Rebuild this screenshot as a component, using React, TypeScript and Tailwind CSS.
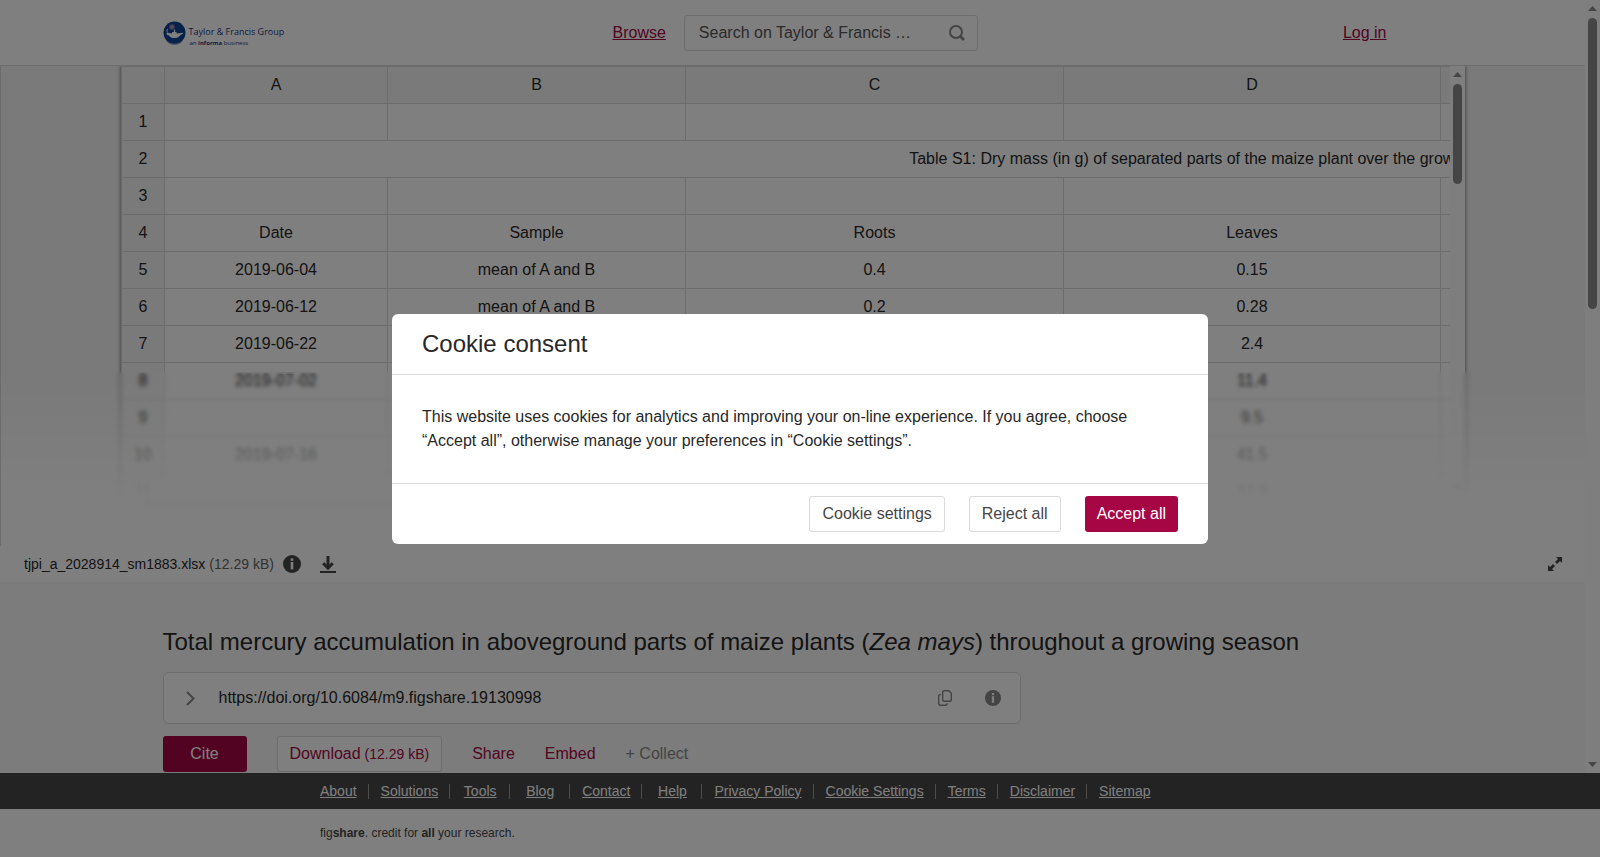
import React, { useState } from 'react';

const ROW_COUNT = 11;
const COLUMNS = ['A', 'B', 'C', 'D', 'E', 'F'];

const CELLS: Record<number, string[]> = {
    4: ['Date', 'Sample', 'Roots', 'Leaves', '', ''],
    5: ['2019-06-04', 'mean of A and B', '0.4', '0.15', '', ''],
    6: ['2019-06-12', 'mean of A and B', '0.2', '0.28', '', ''],
    7: ['2019-06-22', '', '', '2.4', '', ''],
    8: ['2019-07-02', '', '', '11.4', '', ''],
    9: ['', '', '', '9.5', '', ''],
    10: ['2019-07-16', '', '', '41.5', '', ''],
    11: ['', '', '', '37.9', '', ''],
};

const FOOTER_LINKS = [
    'About',
    'Solutions',
    'Tools',
    'Blog',
    'Contact',
    'Help',
    'Privacy Policy',
    'Cookie Settings',
    'Terms',
    'Disclaimer',
    'Sitemap',
];

const InfoIcon: React.FC<{ className?: string }> = ({ className }) => (
    <svg viewBox="0 0 18 18" className={className} aria-hidden="true">
        <circle cx="9" cy="9" r="9" fill="currentColor" />
        <rect x="7.7" y="3.4" width="2.6" height="2.4" fill="#fff" />
        <rect x="7.7" y="7" width="2.6" height="7.4" fill="#fff" />
    </svg>
);

const Logo: React.FC = () => (
    <a href="#" className="flex items-start gap-[3px] pt-[3px] text-[#1f3a85]" aria-label="Taylor & Francis Group">
        <svg viewBox="0 0 23 24" className="w-[23px] h-6" aria-hidden="true">
            <ellipse cx="11.5" cy="13" rx="10.5" ry="10.8" fill="#7d8fb5" />
            <circle cx="11.5" cy="11.5" r="11" fill="#0d4594" />
            <circle cx="9" cy="6" r="3" fill="#5d6aa5" />
            <circle cx="9" cy="6" r="1.8" fill="#b99bb8" />
            <path d="M3.2 12.400l1.600-.6 3.800.6.8-1.400h3.800l.8 1.400 6.200-.6c-.6 1.400-1.600 2-3 2.400-1 1.600-2.800 2.600-4.600 2.800h-2.400c-1.800-.2-3.400-1.200-4.200-2.600-1.200-.2-2.200-.8-2.800-2z" fill="#fff" />
            <path d="M11.5 8.500v2.800" stroke="#fff" strokeWidth="1.2" />
            <path d="M4.600 8c-.8 1.200-.8 2.400 0 3.600" stroke="#fff" strokeWidth=".9" fill="none" />
        </svg>
        <span className="flex flex-col pt-1 font-['Open_Sans',sans-serif]">
            <span className="text-[9px] leading-[14px] whitespace-nowrap">Taylor &amp; Francis Group</span>
            <span className="text-[6px] leading-[8px] whitespace-nowrap pl-px">
                an <b>informa</b> business
            </span>
        </span>
    </a>
);

const Header: React.FC = () => (
    <header className="bg-white border-b border-[#dadada]">
        <div className="w-full max-w-[1260px] mx-auto h-[65px] flex items-center">
            <div className="w-[450px]">
                <Logo />
            </div>
            <a href="#" className="text-[#a60744] underline mr-[18px]">Browse</a>
            <form className="w-[294px] h-9 flex items-center border border-[#dadada] rounded-[3px] pl-3.5 pr-1.5">
                <input
                    type="text"
                    aria-label="Search"
                    placeholder="Search on Taylor & Francis …"
                    className="flex-1 min-w-0 outline-none placeholder:text-[#555] placeholder:opacity-100"
                />
                <button type="submit" aria-label="Search" className="p-1.5 text-[#888]">
                    <svg viewBox="0 0 16 16" className="w-4 h-4" fill="none" stroke="currentColor" aria-hidden="true">
                        <circle cx="7" cy="7" r="6" strokeWidth="2" />
                        <path d="M11.3 11.3 15 15" strokeWidth="2.8" />
                    </svg>
                </button>
            </form>
            <a href="#" className="text-[#a60744] underline ml-auto mr-9">Log in</a>
        </div>
    </header>
);

const Arrow: React.FC<{ down?: boolean }> = ({ down }) => (
    <svg viewBox="0 0 9 5" className="w-[9px] h-[5px]" aria-hidden="true">
        <path d={down ? 'M0 0h9L4.5 5z' : 'M0 5h9L4.5 0z'} fill="#8b8b8b" />
    </svg>
);

const Spreadsheet: React.FC = () => (
    <div className="w-full max-w-[1344px] h-[445px] mx-auto flex flex-col bg-[#fcfcfc] shadow-[0_0_4px_rgba(0,0,0,0.6)]">
        <div className="flex-1 min-h-0 flex">
            <div className="flex-1 min-w-0 overflow-hidden bg-white">
                <table className="table-fixed border-collapse w-[2156px] text-center text-[#282828]">
                    <colgroup>
                        <col className="w-[43px]" />
                        <col className="w-[223px]" />
                        <col className="w-[298px]" />
                        <col className="w-[378px]" />
                        <col className="w-[377px]" />
                        <col />
                        <col />
                    </colgroup>
                    <thead>
                        <tr className="h-[37px] bg-[#f5f5f5]">
                            <th className="border border-[#d8d8d8]" />
                            {COLUMNS.map(col => (
                                <th key={col} className="border border-[#d8d8d8] font-normal">{col}</th>
                            ))}
                        </tr>
                    </thead>
                    <tbody>
                        {Array.from({ length: ROW_COUNT }, (_, i) => i + 1).map(row => (
                            <tr key={row} className="h-[37px]">
                                <th className="border border-[#d8d8d8] bg-[#f5f5f5] font-normal">{row}</th>
                                {row === 2 ? (
                                    <td colSpan={6} className="border border-[#d8d8d8]">
                                        Table S1: Dry mass (in g) of separated parts of the maize plant over the growing season
                                    </td>
                                ) : (
                                    COLUMNS.map((col, i) => (
                                        <td key={col} className="border border-[#d8d8d8]">{CELLS[row]?.[i]}</td>
                                    ))
                                )}
                            </tr>
                        ))}
                    </tbody>
                </table>
            </div>
            <div className="w-[15px] flex flex-col items-center justify-between pt-1.5 pb-1.5">
                <div className="flex flex-col items-center gap-[7px]">
                    <Arrow />
                    <div className="w-[9px] h-[100px] rounded-full bg-[#8b8b8b]" />
                </div>
                <Arrow down />
            </div>
        </div>
        <div className="h-[15px] flex items-center pl-[22px]">
            <div className="w-[810px] h-[9px] rounded-full bg-[#8b8b8b]" />
        </div>
    </div>
);

const Viewer: React.FC = () => (
    <section className="bg-white">
        <div className="relative h-[480px] overflow-hidden bg-[#f4f4f4] border-l border-[#d8d8d8]">
            <Spreadsheet />
            <div className="absolute inset-x-0 bottom-0 h-[174px] backdrop-blur-[2px] bg-linear-to-b from-white/0 via-white/95 via-[71%] to-white" />
        </div>
        <div className="h-9 flex items-center pl-6 pr-[23px] text-sm text-[#282828]">
            <span>tjpi_a_2028914_sm1883.xlsx</span>
            <span className="ml-1 text-[#666]">(12.29 kB)</span>
            <button aria-label="File info" className="ml-[9px] text-[#464646]">
                <InfoIcon className="w-[18px] h-[18px]" />
            </button>
            <a href="#" aria-label="Download file" className="ml-[19px] text-[#464646]">
                <svg viewBox="0 0 16 17" className="w-4 h-[17px]" fill="none" stroke="currentColor" aria-hidden="true">
                    <path d="M8 0v12" strokeWidth="3" />
                    <path d="M3.2 7.300 8 12.100l4.800-4.800" strokeWidth="3" />
                    <path d="M0 16h16" strokeWidth="2" />
                </svg>
            </a>
            <button aria-label="Full screen" className="ml-auto text-[#464646]">
                <svg viewBox="0 0 14 14" className="w-3.5 h-3.5" aria-hidden="true">
                    <path d="M8 0h6v6l-2-2-3 3-2-2 3-3zM6 14H0V8l2 2 3-3 2 2-3 3z" fill="currentColor" />
                    <path d="M6 6l2 2" stroke="#fff" strokeWidth="1.2" />
                </svg>
            </button>
        </div>
    </section>
);

const Article: React.FC = () => (
    <main className="w-full max-w-[1260px] mx-auto pt-[42px]">
        <h1 className="text-2xl leading-9 text-[#282828]">
            Total mercury accumulation in aboveground parts of maize plants (<i>Zea mays</i>) throughout a growing season
        </h1>
        <div className="mt-3 max-w-[858px] h-[52px] flex items-center bg-white border border-[#dadada] rounded-md pl-[22px] pr-[19px]">
            <button aria-label="Show versions" className="text-[#888]">
                <svg viewBox="0 0 9 15" className="w-[9px] h-[15px]" fill="none" stroke="currentColor" strokeWidth="2" aria-hidden="true">
                    <path d="m1 1 6.5 6.5L1 14" />
                </svg>
            </button>
            <span className="ml-6 text-[#282828]">https://doi.org/10.6084/m9.figshare.19130998</span>
            <button aria-label="Copy DOI" className="ml-auto text-[#888]">
                <svg viewBox="0 0 14 16" className="w-3.5 h-4" fill="none" stroke="currentColor" strokeWidth="1.4" aria-hidden="true">
                    <path d="M6.200.7h4.600l2.500 2.500v6.600c0 .9-.6 1.500-1.500 1.500H6.200c-.9 0-1.500-.6-1.500-1.500V2.200c0-.9.6-1.500 1.500-1.500z" />
                    <path d="M3 4.600h-.8C1.300 4.600.7 5.200.7 6.100v7.700c0 .9.6 1.500 1.500 1.500h5.400c.9 0 1.500-.6 1.500-1.500v-.6" />
                </svg>
            </button>
            <button aria-label="DOI info" className="ml-[33px] text-[#888]">
                <InfoIcon className="w-4 h-4" />
            </button>
        </div>
        <div className="mt-3 flex items-center gap-[30px] text-[#a60744]">
            <button className="w-[84px] h-9 rounded-[3px] bg-[#a60744] text-white">Cite</button>
            <button className="h-9 px-3 rounded-[3px] bg-white border border-[#dadada]">
                Download<span className="text-sm"> (12.29 kB)</span>
            </button>
            <button>Share</button>
            <button>Embed</button>
            <button className="text-[#888]">+ Collect</button>
        </div>
    </main>
);

const Footer: React.FC = () => (
    <footer className="bg-white">
        <nav className="bg-[#464646] h-9 flex items-center">
            <ul className="w-full max-w-[960px] mx-auto flex text-sm leading-[15px] text-center text-white">
                {FOOTER_LINKS.map(link => (
                    <li
                        key={link}
                        className="min-w-[60px] pl-3 pr-[11px] border-r border-[#999] first:min-w-0 first:pl-0 last:border-r-0 whitespace-nowrap"
                    >
                        <a href="#" className="underline">{link}</a>
                    </li>
                ))}
            </ul>
        </nav>
        <p className="w-full max-w-[960px] mx-auto h-12 flex items-center text-xs text-[#464646]">
            <span>
                fig<b>share</b>. credit for <b>all</b> your research.
            </span>
        </p>
    </footer>
);

const CookieDialog: React.FC<{ onClose: () => void }> = ({ onClose }) => (
    <div className="fixed inset-0 bg-black/50 flex items-center justify-center">
        <div role="dialog" aria-labelledby="cookie-title" className="w-full max-w-[816px] bg-white rounded-md text-[#282828]">
            <h2 id="cookie-title" className="px-[30px] text-2xl leading-[60px] border-b border-[#dadada]">Cookie consent</h2>
            <p className="p-[30px] leading-6">
                This website uses cookies for analytics and improving your on-line experience. If you agree, choose “Accept all”, otherwise manage your preferences in “Cookie settings”.
            </p>
            <div className="flex justify-end gap-6 px-[30px] py-3 border-t border-[#dadada]">
                <button className="h-9 px-3 rounded-[3px] border border-[#dadada] text-[#464646]">Cookie settings</button>
                <button onClick={onClose} className="h-9 px-3 rounded-[3px] border border-[#dadada] text-[#464646]">Reject all</button>
                <button onClick={onClose} className="h-9 px-3 rounded-[3px] bg-[#a60744] text-white">Accept all</button>
            </div>
        </div>
    </div>
);

const App: React.FC = () => {
    const [showCookies, setShowCookies] = useState(true);

    return (
        <div className="h-screen flex flex-col bg-[#f8f8f8] font-['Liberation_Sans',Arial,sans-serif] text-base overflow-hidden">
            <div className="flex-1 min-h-0 flex">
                <div className="flex-1 min-w-0 overflow-hidden">
                    <Header />
                    <Viewer />
                    <Article />
                </div>
                <div className="w-[15px] flex flex-col items-center justify-between bg-[#fcfcfc] pt-1.5 pb-1.5">
                    <div className="flex flex-col items-center gap-[7px]">
                        <Arrow />
                        <div className="w-[9px] h-[291px] rounded-full bg-[#8b8b8b]" />
                    </div>
                    <Arrow down />
                </div>
            </div>
            <Footer />
            {showCookies && <CookieDialog onClose={() => setShowCookies(false)} />}
        </div>
    );
};

export default App;
